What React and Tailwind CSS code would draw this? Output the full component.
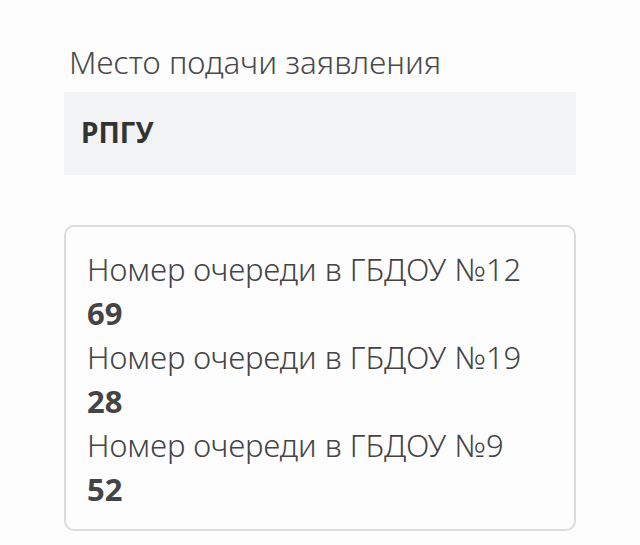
function QueueRow({ name, number }) {
  return (
    <div className="flex flex-col">
      <div className="h-[44px] leading-[44px] font-light">{name}</div>
      <div className="h-[44px] leading-[44px] font-bold text-[31px]">{number}</div>
    </div>
  );
}

export default function App() {
  const queues = [
    { name: "Номер очереди в ГБДОУ №12", number: 69 },
    { name: "Номер очереди в ГБДОУ №19", number: 28 },
    { name: "Номер очереди в ГБДОУ №9", number: 52 },
  ];

  return (
    <div className="w-[640px] h-[545px] bg-[#fdfdfd] text-[#444444] font-['Noto_Sans',sans-serif] overflow-hidden">
      <div className="px-[64px] pt-[36px]">
        {/* Место подачи */}
        <div className="pl-[5px] h-[56px] leading-[52px] text-[31.5px] font-light text-[#4a4a4a]">
          Место подачи заявления
        </div>
        <div className="h-[83px] bg-[#f2f3f5] flex items-center px-[17px] pb-[4px] text-[28px] font-bold text-[#333333]">
          РПГУ
        </div>

        {/* Очереди */}
        <div className="mt-[50px] h-[306px] border-2 border-[#dcdcdc] rounded-[10px] px-[21px] pt-[20px] text-[31px]">
          {queues.map((q, i) => (
            <QueueRow key={i} name={q.name} number={q.number} />
          ))}
        </div>
      </div>
    </div>
  );
}
